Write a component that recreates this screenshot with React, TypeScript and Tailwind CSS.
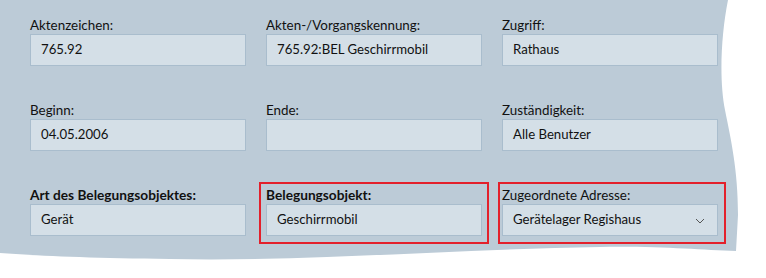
import React from 'react'

interface FieldProps {
    label: string
    value: string
    bold?: boolean
    select?: boolean
}

const Field: React.FC<FieldProps> = ({ label, value, bold, select }) => {
    return (
        <div className='flex flex-col'>
            <div className={'h-[18px] leading-[18px] text-[#111] whitespace-nowrap ' + (bold ? 'font-bold text-[13.7px]' : 'text-[13.4px]')}>
                {label}
            </div>
            <div className='h-[32px] flex items-center justify-between bg-[#d4dfe7] border border-[#a9bdcd] pl-[10px] pr-[12px] text-[13.2px] text-[#111]'>
                <span className='whitespace-nowrap'>{value}</span>
                {select && (
                    <svg width="10" height="6" viewBox="0 0 10 6" className='mt-[1px]'>
                        <path d="M1 1 L5 5 L9 1" fill="none" stroke="#555" strokeWidth="1" />
                    </svg>
                )}
            </div>
        </div>
    )
}

const App: React.FC = () => {
    return (
        <div className='relative w-[766px] h-[278px] bg-white overflow-hidden' style={{ fontFamily: 'Lato, "Noto Sans", sans-serif' }}>
            {/* torn paper panel */}
            <svg className='absolute inset-0' width="766" height="278" viewBox="0 0 766 278">
                <path
                    d="M0 0 L728 0 C721 35 719 80 725 110 C731 140 738 170 738 215 L736 251 C700 250 660 246 600 247 C460 249 300 262 170 259 C90 258 40 256 0 253 Z"
                    fill="#bccbd7"
                />
            </svg>

            <div className='relative grid grid-cols-[216px_216px_216px] gap-x-[20px] gap-y-[35px] pl-[30px] pt-[16px]'>
                <Field label='Aktenzeichen:' value='765.92' />
                <Field label='Akten-/Vorgangskennung:' value='765.92:BEL Geschirrmobil' />
                <Field label='Zugriff:' value='Rathaus' />

                <Field label='Beginn:' value='04.05.2006' />
                <Field label='Ende:' value='' />
                <Field label='Zuständigkeit:' value='Alle Benutzer' />

                <Field label='Art des Belegungsobjektes:' value='Gerät' bold />
                <div className='-ml-[7px] -mr-[7px] -mt-[4px] -mb-[8px] border-2 border-[#e3202b] pl-[5px] pr-[5px] pt-[2px] pb-[6px]'>
                    <Field label='Belegungsobjekt:' value='Geschirrmobil' bold />
                </div>
                <div className='-ml-[4px] -mr-[8px] -mt-[4px] -mb-[8px] border-2 border-[#e3202b] pl-[2px] pr-[6px] pt-[2px] pb-[6px]'>
                    <Field label='Zugeordnete Adresse:' value='Gerätelager Regishaus' select />
                </div>
            </div>
        </div>
    )
}

export default App
